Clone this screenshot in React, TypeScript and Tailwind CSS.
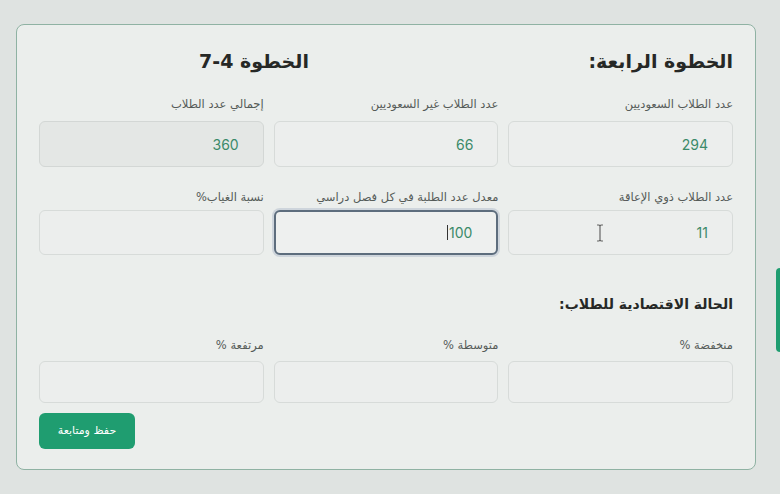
const arabic = "font-['DejaVu_Sans',sans-serif]";

type Field = { label: string; value?: string; readOnly?: boolean; focused?: boolean; cursor?: boolean };

const rowOne: Field[] = [
  { label: "عدد الطلاب السعوديين", value: "294" },
  { label: "عدد الطلاب غير السعوديين", value: "66" },
  { label: "إجمالي عدد الطلاب", value: "360", readOnly: true },
];

const rowTwo: Field[] = [
  { label: "عدد الطلاب ذوي الإعاقة", value: "11", cursor: true },
  { label: "معدل عدد الطلبة في كل فصل دراسي", value: "100", focused: true },
  { label: "نسبة الغياب%" },
];

const rowThree: Field[] = [
  { label: "منخفضة %" },
  { label: "متوسطة %" },
  { label: "مرتفعة %" },
];

function Input({ field, height }: { field: Field; height: string }) {
  const base = "relative flex items-center rounded-md pr-6 text-[14px] text-[#3b8a69] font-['Inter',sans-serif]";
  const look = field.focused
    ? "border-2 border-[#5d6d7d] bg-[#eef0ef] shadow-[0_0_0_2px_rgba(120,140,170,0.25)]"
    : field.readOnly
      ? "border border-[#d3d7d5] bg-[#e4e7e5]"
      : "border border-[#d7dbd9] bg-[#eceeed]";
  return (
    <div className={`${base} ${look} ${height}`}>
      {field.value && (
        <span className="flex items-center" dir="ltr">
          {field.focused && <span className="mr-px inline-block h-[15px] w-px bg-[#333]" />}
          {field.value}
        </span>
      )}
      {field.cursor && (
        <svg className="absolute right-[128px] top-[13px]" width="8" height="18" viewBox="0 0 8 18">
          <path d="M1 1h2l1 1 1-1h2M4 2v14M1 17h2l1-1 1 1h2" fill="none" stroke="#666" strokeWidth="1.2" />
        </svg>
      )}
    </div>
  );
}

function FieldRow({ fields, height, labelGap }: { fields: Field[]; height: string; labelGap: string }) {
  return (
    <div className="grid grid-cols-3 gap-x-[10px]">
      {fields.map((f) => (
        <div key={f.label}>
          <label className={`block text-[11.5px] leading-4 text-[#555b58] ${labelGap}`}>{f.label}</label>
          <Input field={f} height={height} />
        </div>
      ))}
    </div>
  );
}

export default function App() {
  return (
    <div dir="rtl" className={`relative h-[494px] w-[780px] overflow-hidden bg-[#dfe3e1] ${arabic}`}>
      <div className="pr-[24px] pl-[16px] pt-[24px]">
        <div className="rounded-lg border border-[#8fb2a3] bg-[#ebeeec] pr-[22px] pl-[22px] pt-[20px] pb-[20px]">
          <div className="mb-[19px] flex items-center justify-between pl-[160px]">
            <h2 className="text-[19px] font-bold leading-8 text-[#262826]">الخطوة الرابعة:</h2>
            <h2 className="text-[19px] font-bold leading-8 text-[#262826]">الخطوة 4-7</h2>
          </div>

          <FieldRow fields={rowOne} height="h-[46px]" labelGap="mb-[9px]" />
          <div className="mt-[22px]">
            <FieldRow fields={rowTwo} height="h-[45px]" labelGap="mb-[5px]" />
          </div>

          <h3 className="mt-[40px] text-[14px] font-semibold leading-[18px] text-[#262826]">الحالة الاقتصادية للطلاب:</h3>
          <div className="mt-[24px]">
            <FieldRow fields={rowThree} height="h-[42px]" labelGap="mb-2" />
          </div>

          <div className="mt-[10px] flex justify-end">
            <button className="h-[36px] w-[96px] rounded-md bg-[#1f9d70] text-[11px] text-white">حفظ ومتابعة</button>
          </div>
        </div>
      </div>
      <div className="absolute right-0 top-[268px] h-[84px] w-[4px] rounded-l bg-[#1f9d70]" />
    </div>
  );
}
